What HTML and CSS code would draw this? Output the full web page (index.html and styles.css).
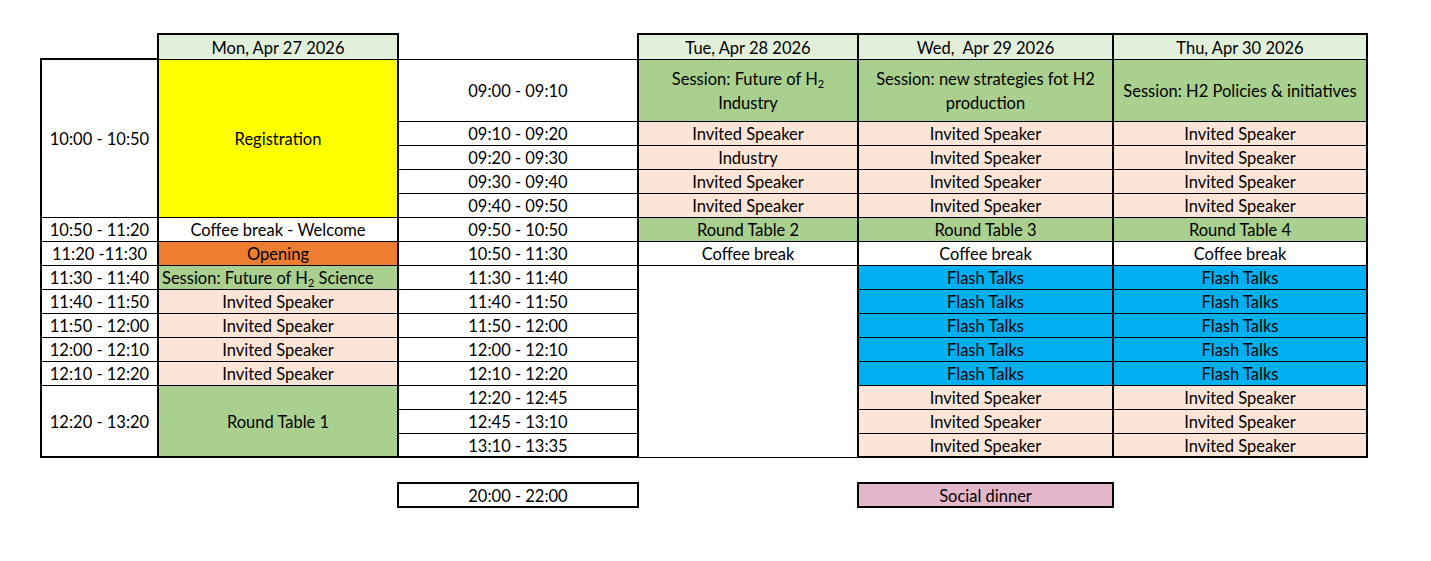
FILE: index.html
```html
<!DOCTYPE html>
<html lang="en">
<head>
<meta charset="utf-8">
<title>Conference schedule</title>
<link rel="stylesheet" href="styles.css">
</head>
<body>
<div class="sheet">
<table class="grid">
<colgroup><col class="c-a"><col class="c-b"><col class="c-c"><col class="c-d"><col class="c-e"><col class="c-f"></colgroup>
<tbody>
<tr class="r-head">
  <td class="blank"></td>
  <th class="day">Mon, Apr 27 2026</th>
  <td class="blank"></td>
  <th class="day">Tue, Apr 28 2026</th>
  <th class="day">Wed,&nbsp; Apr 29 2026</th>
  <th class="day">Thu, Apr 30 2026</th>
</tr>
<tr class="r-tall">
  <td class="cell first-a" rowspan="5">10:00 - 10:50</td>
  <td class="cell yellow" rowspan="5">Registration</td>
  <td class="cell">09:00 - 09:10</td>
  <td class="cell green wrap">Session: Future of H<sub>2</sub><br>Industry</td>
  <td class="cell green wrap">Session: new strategies fot H2<br>production</td>
  <td class="cell green">Session: H2 Policies &amp; initiatives</td>
</tr>
<tr><td class="cell">09:10 - 09:20</td><td class="cell peach">Invited Speaker</td><td class="cell peach">Invited Speaker</td><td class="cell peach">Invited Speaker</td></tr>
<tr><td class="cell">09:20 - 09:30</td><td class="cell peach">Industry</td><td class="cell peach">Invited Speaker</td><td class="cell peach">Invited Speaker</td></tr>
<tr><td class="cell">09:30 - 09:40</td><td class="cell peach">Invited Speaker</td><td class="cell peach">Invited Speaker</td><td class="cell peach">Invited Speaker</td></tr>
<tr><td class="cell">09:40 - 09:50</td><td class="cell peach">Invited Speaker</td><td class="cell peach">Invited Speaker</td><td class="cell peach">Invited Speaker</td></tr>
<tr>
  <td class="cell">10:50 - 11:20</td><td class="cell">Coffee break - Welcome</td><td class="cell">09:50 - 10:50</td>
  <td class="cell green">Round Table 2</td><td class="cell green">Round Table 3</td><td class="cell green">Round Table 4</td>
</tr>
<tr>
  <td class="cell">11:20 -11:30</td><td class="cell orange">Opening</td><td class="cell">10:50 - 11:30</td>
  <td class="cell">Coffee break</td><td class="cell">Coffee break</td><td class="cell">Coffee break</td>
</tr>
<tr>
  <td class="cell">11:30 - 11:40</td><td class="cell green left">Session: Future of H<sub>2</sub> Science</td><td class="cell">11:30 - 11:40</td>
  <td class="cell empty" rowspan="8"></td><td class="cell blue">Flash Talks</td><td class="cell blue">Flash Talks</td>
</tr>
<tr><td class="cell">11:40 - 11:50</td><td class="cell peach">Invited Speaker</td><td class="cell">11:40 - 11:50</td><td class="cell blue">Flash Talks</td><td class="cell blue">Flash Talks</td></tr>
<tr><td class="cell">11:50 - 12:00</td><td class="cell peach">Invited Speaker</td><td class="cell">11:50 - 12:00</td><td class="cell blue">Flash Talks</td><td class="cell blue">Flash Talks</td></tr>
<tr><td class="cell">12:00 - 12:10</td><td class="cell peach">Invited Speaker</td><td class="cell">12:00 - 12:10</td><td class="cell blue">Flash Talks</td><td class="cell blue">Flash Talks</td></tr>
<tr><td class="cell">12:10 - 12:20</td><td class="cell peach">Invited Speaker</td><td class="cell">12:10 - 12:20</td><td class="cell blue">Flash Talks</td><td class="cell blue">Flash Talks</td></tr>
<tr>
  <td class="cell last" rowspan="3">12:20 - 13:20</td><td class="cell green last" rowspan="3">Round Table 1</td><td class="cell">12:20 - 12:45</td>
  <td class="cell peach">Invited Speaker</td><td class="cell peach">Invited Speaker</td>
</tr>
<tr><td class="cell">12:45 - 13:10</td><td class="cell peach">Invited Speaker</td><td class="cell peach">Invited Speaker</td></tr>
<tr><td class="cell last">13:10 - 13:35</td><td class="cell peach last">Invited Speaker</td><td class="cell peach last">Invited Speaker</td></tr>
<tr class="r-gap"><td class="blank" colspan="6"></td></tr>
<tr>
  <td class="blank"></td><td class="blank"></td>
  <td class="box">20:00 - 22:00</td>
  <td class="blank"></td>
  <td class="box pink">Social dinner</td>
  <td class="blank"></td>
</tr>
</tbody>
</table>
</div>
</body>
</html>
```

FILE: styles.css
```css
body {
  margin: 0;
  background: #ffffff;
  color: #000000;
  font-family: Lato, "Liberation Sans", sans-serif;
  font-size: 16.5px;
}

.sheet {
  padding: 33px 0 0 40px;
}

.grid {
  border-collapse: collapse;
  table-layout: fixed;
  width: 1326px;
}

.c-a { width: 117px; }
.c-b { width: 240px; }
.c-c { width: 240px; }
.c-d { width: 220px; }
.c-e { width: 255px; }
.c-f { width: 254px; }

.grid td,
.grid th {
  padding: 2px 2px 0;
  text-align: center;
  vertical-align: middle;
  font-weight: normal;
  white-space: nowrap;
  line-height: 20px;
}

.grid tr { height: 24px; }
.grid tr.r-head { height: 25px; }
.grid tr.r-tall { height: 62px; }
.grid tr.r-gap { height: 26px; }

.blank { border: none; }

.day {
  background: #e2efda;
  border: 2px solid #000;
  border-bottom-width: 1px;
}

.cell {
  border: 1px solid #000;
  border-left-width: 2px;
  border-right-width: 2px;
}

.cell.first-a { border-top-width: 2px; }
.cell.last { border-bottom-width: 2px; }
.cell.wrap { line-height: 24px; }
.cell.left { text-align: left; padding-left: 3px; }

.yellow { background: #ffff00; }
.green { background: #a9d08e; }
.peach { background: #fce4d6; }
.orange { background: #ed7d31; }
.blue { background: #00b0f0; }
.pink { background: #e4b6ca; }

.box {
  border: 2px solid #000;
}

sub {
  font-size: 11px;
  line-height: 0;
  vertical-align: -3px;
}
```
